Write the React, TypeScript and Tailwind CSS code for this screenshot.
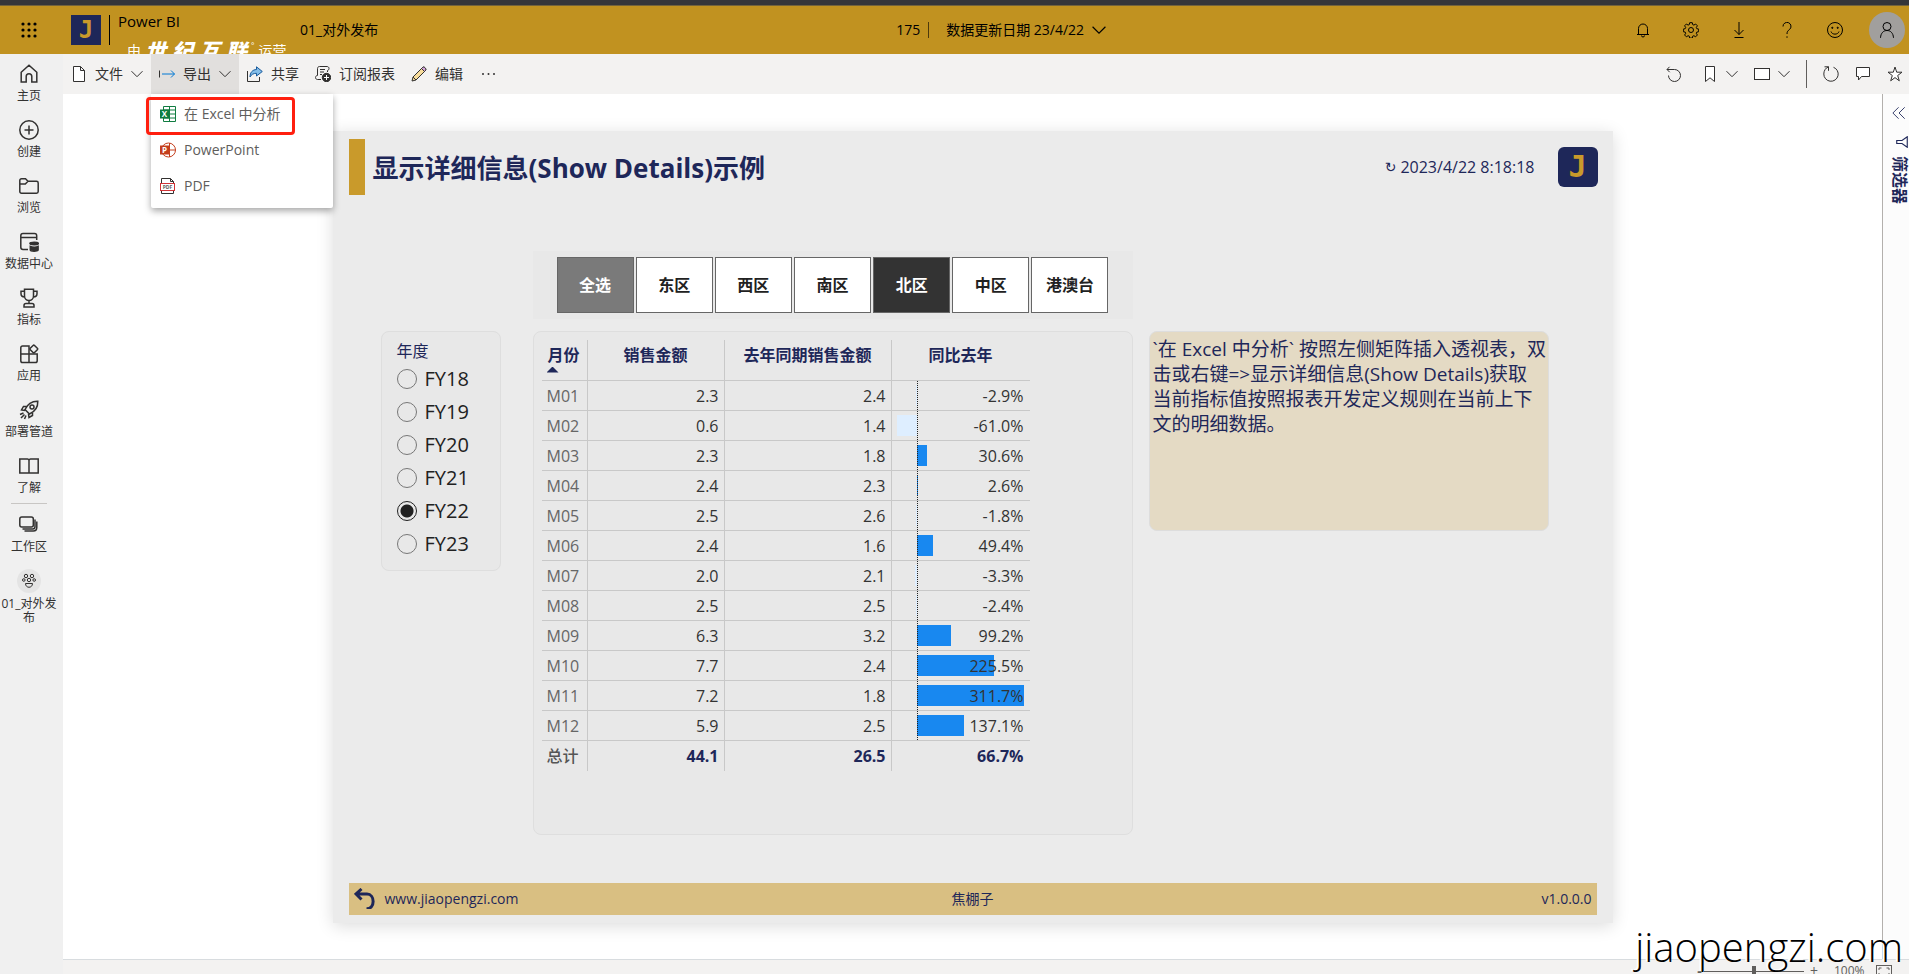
import { useState } from "react";
import type { ReactNode } from "react";

type IconProps = { className?: string; children: ReactNode; box?: number };

function Icon({ className = "size-4", children, box = 16 }: IconProps) {
  return (
    <svg
      viewBox={`0 0 ${box} ${box}`}
      className={`shrink-0 ${className}`}
      fill="none"
      stroke="currentColor"
      strokeWidth="1"
      aria-hidden="true">
      {children}
    </svg>
  );
}

function Chevron({ className = "size-3" }: { className?: string }) {
  return (
    <Icon box={12} className={className}>
      <path d="M.5 3.200 6 8.700l5.500-5.500" />
    </Icon>
  );
}

function Logo({ className }: { className: string }) {
  return (
    <span
      className={`flex shrink-0 items-center justify-center bg-[#1e2759] font-['DejaVu_Sans_Mono',monospace] font-bold text-[#c99a2b] ${className}`}>
      J
    </span>
  );
}

const navItems = [
  {
    label: "主页",
    icon: <path d="M2.200 8.300 10 1.200l7.800 7.100V18h-5v-5.500a2.800 2.800 0 0 0-5.600 0V18h-5z" />,
  },
  {
    label: "创建",
    icon: (
      <>
        <circle cx="10" cy="10" r="9.200" />
        <path d="M10 5.500v9M5.500 10h9" />
      </>
    ),
  },
  {
    label: "浏览",
    icon: <path d="M.8 15.500v-11c0-1 .7-1.700 1.700-1.700h4l2.500 2.400h8.500c1 0 1.700.7 1.700 1.700v8.600c0 1-.7 1.700-1.700 1.700h-15c-1 0-1.700-.7-1.700-1.700zM.8 8h5.500L9 5.200" />,
  },
  {
    label: "数据中心",
    icon: (
      <>
        <path d="M9 17.500H4A2.200 2.200 0 0 1 1.800 15.300V3.700C1.800 2.500 2.800 1.500 4 1.500h11.500c1.200 0 2.200 1 2.200 2.200V8M1.800 5.500h15.900" />
        <ellipse cx="15.200" cy="11.500" rx="4.300" ry="1.200" fill="currentColor" />
        <path d="M11.300 14.500v3.500c0 1.600 7.800 1.600 7.800 0v-3.500c-1.600 1-6 1-7.800 0z" fill="currentColor" />
      </>
    ),
  },
  {
    label: "指标",
    icon: (
      <path d="M5.500 1.300h9V8a4.500 4.500 0 0 1-9 0zM5.500 3.300H2v2.500C2 8 3.500 9 5.700 9M14.500 3.300H18v2.500C18 8 16.500 9 14.300 9M10 12.500v3M5 19v-1.500c0-1.200.8-2 2-2h6c1.200 0 2 .8 2 2V19z" />
    ),
  },
  {
    label: "应用",
    icon: (
      <>
        <path d="M10 10V2H3.500C2.500 2 1.800 2.700 1.800 3.700v13c0 1 .7 1.800 1.700 1.800h13c1 0 1.700-.8 1.700-1.800V10H1.800M10 10v8.500" />
        <rect x="11.800" y="2" width="6" height="6" rx="1" transform="rotate(45 14.800 5)" />
      </>
    ),
  },
  {
    label: "部署管道",
    icon: (
      <>
        <path d="M6 9.500C8.500 4 12.500 1 18.800 1.200 19 7.500 16 11.500 10.500 14zM8 6.500H4.500L2.500 10l3.500.5M13.500 12v3.500L10 17.500 9.500 14" />
        <circle cx="13" cy="7" r="2" />
        <path d="M4.500 13 1 14.500M5.500 14.500 2 18M7 15.500 5.500 19" />
      </>
    ),
  },
  {
    label: "了解",
    icon: <path d="M10 4.500C10 3.700 9.300 3 8.500 3H.8v14H10zm0 0c0-.8.7-1.500 1.500-1.500h7.700v14H10z" />,
  },
];

const regions = ["全选", "东区", "西区", "南区", "北区", "中区", "港澳台"];
const years = ["FY18", "FY19", "FY20", "FY21", "FY22", "FY23"];

const rows = [
  { month: "M01", sales: "2.3", last: "2.4", yoy: -2.9 },
  { month: "M02", sales: "0.6", last: "1.4", yoy: -61.0 },
  { month: "M03", sales: "2.3", last: "1.8", yoy: 30.6 },
  { month: "M04", sales: "2.4", last: "2.3", yoy: 2.6 },
  { month: "M05", sales: "2.5", last: "2.6", yoy: -1.8 },
  { month: "M06", sales: "2.4", last: "1.6", yoy: 49.4 },
  { month: "M07", sales: "2.0", last: "2.1", yoy: -3.3 },
  { month: "M08", sales: "2.5", last: "2.5", yoy: -2.4 },
  { month: "M09", sales: "6.3", last: "3.2", yoy: 99.2 },
  { month: "M10", sales: "7.7", last: "2.4", yoy: 225.5 },
  { month: "M11", sales: "7.2", last: "1.8", yoy: 311.7 },
  { month: "M12", sales: "5.9", last: "2.5", yoy: 137.1 },
];

const maxYoy = 311.7;
const minYoy = 61;

function TopBar() {
  return (
    <header className="flex h-[54px] shrink-0 items-center overflow-hidden border-t-[5px] border-[#35363a] bg-[#c19220] pr-1 text-black shadow-[inset_0_1px_0_#73633c]">
      <button aria-label="应用启动器" className="ml-5 flex size-[18px] items-center justify-center">
        <svg viewBox="0 0 16 16" className="size-4" aria-hidden="true">
          {[2, 8, 14].map((y) => [2, 8, 14].map((x) => <circle key={`${x}-${y}`} cx={x} cy={y} r="1.600" />))}
        </svg>
      </button>
      <Logo className="ml-[33px] size-[30px] text-2xl leading-none" />
      <span className="ml-2 h-[30px] w-px bg-black" />
      <div className="ml-2 h-[38px] w-[182px] whitespace-nowrap">
        <p className="text-[15px] leading-5">Power BI</p>
        <p className="ml-[9px] flex items-start gap-1 pt-2 text-sm leading-6 text-white">
          <span>由</span>
          <span className="flex gap-[6px] text-[21px] font-black italic">
            <span>世</span>
            <span>纪</span>
            <span>互</span>
            <span>联</span>
          </span>
          <span className="text-[8px] leading-3">°</span>
          <span>运营</span>
        </p>
      </div>
      <span className="text-sm">01_对外发布</span>
      <div className="ml-[518px] flex items-center text-sm">
        <span>175</span>
        <span className="ml-2 h-4 w-px bg-black/60" />
        <button className="ml-[17px] flex items-center gap-2">
          <span>数据更新日期 23/4/22</span>
          <Chevron className="size-[14px]" />
        </button>
      </div>
      <div className="ml-auto flex items-center">
        <button aria-label="通知" className="flex w-12 justify-center">
          <Icon>
            <path d="M2 12.500h12M3.500 12.500V6.500a4.500 4.500 0 0 1 9 0v6M6.500 13.500a1.500 1.500 0 0 0 3 0" />
          </Icon>
        </button>
        <button aria-label="设置" className="flex w-12 justify-center">
          <Icon>
            <path d="M6.700.7h2.600l.4 1.900 1.200.5 1.700-1.100 1.800 1.800-1.100 1.700.5 1.200 1.900.4v2.600l-1.900.4-.5 1.200 1.100 1.700-1.800 1.800-1.700-1.100-1.200.5-.4 1.900H6.700l-.4-1.900-1.200-.5-1.700 1.100L1.600 13l1.100-1.700-.5-1.200-1.900-.4V7.100l1.900-.4.5-1.200-1.100-1.700L3.400 2l1.700 1.100 1.200-.5z" />
            <circle cx="8" cy="8" r="2.500" />
          </Icon>
        </button>
        <button aria-label="下载" className="flex w-12 justify-center">
          <Icon>
            <path d="M8 0v12.500M3.500 8 8 12.500 12.500 8M3.500 15.500h9" />
          </Icon>
        </button>
        <button aria-label="帮助" className="flex w-12 justify-center">
          <Icon>
            <path d="M4 4.500a4 4 0 1 1 6.500 3C9 8.700 8 9.500 8 12M8 14.300v1.500" />
          </Icon>
        </button>
        <button aria-label="反馈" className="flex w-12 justify-center">
          <Icon>
            <circle cx="8" cy="8" r="7.500" />
            <path d="M4 9.500c1 3.500 7 3.500 8 0" />
            <circle cx="5.300" cy="5.800" r=".6" fill="currentColor" />
            <circle cx="10.700" cy="5.800" r=".6" fill="currentColor" />
          </Icon>
        </button>
        <button
          aria-label="帐户"
          className="ml-[10px] flex size-9 items-center justify-center rounded-full bg-[#a19f9d]">
          <Icon>
            <circle cx="8" cy="4.500" r="4" />
            <path d="M1.500 15.800C1.800 11 4.500 8.500 8 8.500s6.200 2.500 6.500 7.300" />
          </Icon>
        </button>
      </div>
    </header>
  );
}

function SideNav() {
  return (
    <nav className="w-[63px] shrink-0 bg-[#f0f0f0] text-xs text-[#323130]">
      <ul className="w-[58px]">
        {navItems.map((item) => (
          <li key={item.label}>
            <a href="#" className="flex h-14 flex-col items-center gap-1 pt-[10px] leading-4 whitespace-nowrap">
              <Icon box={20} className="size-5 [stroke-width:1.5]">
                {item.icon}
              </Icon>
              {item.label}
            </a>
          </li>
        ))}
      </ul>
      <div className="mt-px ml-[11px] h-px w-9 bg-[#c8c6c4]" />
      <div className="w-[58px]">
        <a href="#" className="flex h-14 flex-col items-center gap-1 pt-[11px] leading-4">
          <Icon box={20} className="size-5 [stroke-width:1.5]">
            <rect x=".8" y="2" width="13.500" height="10" rx="2" />
            <path d="M16 4.500v7.300c0 1.200-1 2.200-2.200 2.200H3.500M17.800 6.500v6c0 2-1.500 3.500-3.500 3.500H5.500" />
          </Icon>
          工作区
        </a>
        <a href="#" className="flex flex-col items-center gap-1 pt-[9px] text-center leading-[14px]">
          <span className="flex size-6 items-center justify-center rounded-full bg-[#e4e4e4]">
            <Icon className="size-4">
              <circle cx="5" cy="3" r="1.700" />
              <circle cx="11" cy="3" r="1.700" />
              <circle cx="2.800" cy="7" r="1.300" />
              <circle cx="13.200" cy="7" r="1.300" />
              <circle cx="8" cy="7" r="1.700" />
              <path d="M4.500 10.500h7c0 5-7 5-7 0z" />
            </Icon>
          </span>
          <span className="w-14">
            01_对外发
            <br />布
          </span>
        </a>
      </div>
    </nav>
  );
}

function ExportMenu() {
  return (
    <div
      role="menu"
      className="absolute top-full left-0 z-20 w-[182px] rounded-b-xs bg-white pt-0.5 pb-1 text-[#605e5c] shadow-[0_3px_7px_rgba(0,0,0,0.35)]">
      <button role="menuitem" className="flex h-9 w-full items-center gap-2 px-[9px]">
        <svg viewBox="0 0 16 16" className="size-4" aria-hidden="true">
          <path d="M3.500.5h12v15h-12zM9.500.5v15M3.500 4h12M3.500 8h12M3.500 12h12" fill="#fff" stroke="#107c41" />
          <rect y="3.500" width="9" height="9" fill="#107c41" />
          <text x="4.500" y="11" fontSize="8" fontWeight="700" textAnchor="middle" fill="#fff">
            X
          </text>
        </svg>
        在 Excel 中分析
      </button>
      <button role="menuitem" className="flex h-9 w-full items-center gap-2 px-[9px]">
        <svg viewBox="0 0 16 16" className="size-4" aria-hidden="true">
          <circle cx="8.500" cy="8" r="7" fill="#fff" stroke="#c43e1c" />
          <path d="M9.500 1v14M9.500 8h6" stroke="#c43e1c" />
          <rect y="3.500" width="9" height="9" fill="#c43e1c" />
          <text x="4.500" y="11" fontSize="8" fontWeight="700" textAnchor="middle" fill="#fff">
            P
          </text>
        </svg>
        PowerPoint
      </button>
      <button role="menuitem" className="flex h-9 w-full items-center gap-2 px-[9px]">
        <svg viewBox="0 0 16 16" className="size-4" aria-hidden="true">
          <path d="M1.500 5V.5h9l3 3V5M1.500 12.500v3h12v-3M10.500.5v3h3" fill="none" stroke="#323130" />
          <rect x=".5" y="5.500" width="14" height="7" fill="#fff" stroke="#d13438" />
          <text x="7.500" y="11" fontSize="5" fontWeight="700" textAnchor="middle" fill="#605e5c">
            PDF
          </text>
        </svg>
        PDF
      </button>
      <div className="pointer-events-none absolute top-[3px] -left-[5px] h-[38px] w-[149px] rounded-[4px] border-[3px] border-[#ff1f0f]" />
    </div>
  );
}

function Toolbar() {
  const [open, setOpen] = useState(true);

  return (
    <div className="flex h-10 shrink-0 items-stretch bg-[#f3f2f1] text-sm whitespace-nowrap text-[#323130]">
      <button className="flex items-center gap-2 px-2">
        <Icon>
          <path d="M2.500.5h7l4 4v11h-11zM9.500.5v4h4" fill="#fff" />
        </Icon>
        文件
        <Chevron />
      </button>
      <div className="relative flex">
        <button
          aria-expanded={open}
          onClick={() => setOpen(!open)}
          className="flex items-center gap-2 bg-[#e1dfdd] px-2">
          <Icon>
            <path d="M.5 4.500v7" />
            <path d="M3 8h12.500M12 4.500 15.500 8 12 11.500" stroke="#0078d4" />
          </Icon>
          导出
          <Chevron />
        </button>
        {open && <ExportMenu />}
      </div>
      <button className="flex items-center gap-2 px-2">
        <Icon>
          <path d="M.5 5v10.500h12V11" />
          <path d="M9.500.8 15.300 5.500 9.500 10V7.300C6.500 7.300 4.500 8.300 3 11c0-4.500 2.500-7.300 6.500-7.500z" fill="#83bde8" stroke="#185a9c" />
        </Icon>
        共享
      </button>
      <button className="flex items-center gap-2 px-2">
        <Icon>
          <path d="M6 13.500H2.500c-1 0-2-.7-2-2 0-1 .7-2 2-2V2.500c0-1 .7-2 2-2h7.500c1 0 2 .7 2 2 0 1-.7 2-1.500 2V6M5 3.500h5M5 6h4M5 8.500h2" />
          <circle cx="11.500" cy="11.500" r="4.200" fill="#323130" />
          <path d="M11.500 9v5M9 11.500h5" stroke="#fff" />
        </Icon>
        订阅报表
      </button>
      <button className="flex items-center gap-2 px-2">
        <Icon>
          <path d="M1 15l1-4L11.500 1.500c1.500-1.500 4.300 1.300 3 3L5 14z" fill="#f7dc9b" />
          <path d="M10.500 2.500l3 3 1-1c1.300-1.700-1.500-4.500-3-3z" fill="#d4a5d8" />
          <path d="M2 11l3 3" />
        </Icon>
        编辑
      </button>
      <button aria-label="更多选项" className="flex items-center px-2">
        <Icon>
          <circle cx="4" cy="8" r="1" fill="currentColor" stroke="none" />
          <circle cx="9.500" cy="8" r="1" fill="currentColor" stroke="none" />
          <circle cx="15" cy="8" r="1" fill="currentColor" stroke="none" />
        </Icon>
      </button>

      <div className="ml-auto flex items-stretch">
        <button aria-label="重置" className="mr-1 flex items-center px-2">
          <Icon>
            <path d="M3.500.8 1 3.500l2.700 2.700M1 3.500h7.500a6 6 0 1 1-6 6" />
          </Icon>
        </button>
        <button aria-label="书签" className="flex items-center gap-2 px-2">
          <Icon>
            <path d="M3.500.5h9v15L8 11.800l-4.500 3.700z" fill="#fff" />
          </Icon>
          <Chevron />
        </button>
        <button aria-label="视图" className="flex items-center gap-2 px-2">
          <Icon>
            <rect x=".5" y="2.500" width="15" height="11" fill="#fff" />
          </Icon>
          <Chevron />
        </button>
        <span className="mx-2 my-1.5 w-px bg-[#605e5c]" />
        <button aria-label="刷新" className="flex items-center px-2">
          <Icon>
            <path d="M1.500.8h4v4M5.500.8C2.500 2 .8 4.800.8 8a7.200 7.200 0 1 0 9.700-6.700" />
          </Icon>
        </button>
        <button aria-label="批注" className="flex items-center px-2">
          <Icon>
            <path d="M1.500 1.500h13v9h-8L3.500 14v-3.500h-2z" fill="#fff" />
          </Icon>
        </button>
        <button aria-label="收藏" className="flex items-center pr-1.5 pl-2">
          <Icon>
            <path d="m8 1 1.700 5.200H15l-4.300 3.300 1.600 5.300L8 11.600l-4.300 3.200 1.600-5.300L1 6.200h5.300z" fill="#fff" />
          </Icon>
        </button>
      </div>
    </div>
  );
}

function RegionSlicer() {
  const [region, setRegion] = useState("北区");

  return (
    <div className="col-start-2 flex h-[68px] items-center gap-0.5 bg-[#e8e8e8] px-6">
      {regions.map((name) => {
        let tone = "bg-white text-[#212121]";
        if (name === "全选") tone = "bg-[#7a7a7a] text-white";
        if (name === region) tone = "bg-[#333333] text-white";
        return (
          <button
            key={name}
            onClick={() => setRegion(name)}
            className={`h-14 flex-1 border border-[#666666] text-base font-bold ${tone}`}>
            {name}
          </button>
        );
      })}
    </div>
  );
}

function YearSlicer() {
  const [year, setYear] = useState("FY22");

  return (
    <fieldset className="w-[120px] self-start rounded-lg border border-[#dedede] bg-[#e8e8e8] px-[15px] pt-[7px] pb-[9px]">
      <legend className="float-left w-full text-base leading-6 text-[#1e2759]">年度</legend>
      {years.map((name) => (
        <label key={name} className="flex h-[33px] w-full items-center gap-2 text-xl text-[#212121]">
          <input
            type="radio"
            name="year"
            checked={name === year}
            onChange={() => setYear(name)}
            className="size-5 appearance-none rounded-full border border-[#777777] checked:border-[#212121] checked:bg-[radial-gradient(circle,#212121_6px,transparent_7px)]"
          />
          {name}
        </label>
      ))}
    </fieldset>
  );
}

// negative values grow to the left of the axis, positive ones to the right
function YoyCell({ value }: { value: number }) {
  return (
    <td className="relative pr-1.5 text-right">
      <span className="absolute inset-y-0 right-1.5 left-[5px] flex items-center">
        <span className="flex w-5 justify-end">
          {value < 0 && (
            <span className="h-[21px] bg-[#deeeff]" style={{ width: `${(-value / minYoy) * 100}%` }} />
          )}
        </span>
        <span className="flex flex-1">
          {value > 0 && (
            <span className="h-[21px] bg-[#1888f0]" style={{ width: `${(value / maxYoy) * 100}%` }} />
          )}
        </span>
      </span>
      <span className="absolute inset-y-0 left-[25px] w-px bg-[repeating-linear-gradient(#222_0_1px,transparent_1px_2px)]" />
      <span className="relative">{value.toFixed(1)}%</span>
    </td>
  );
}

function SalesTable() {
  return (
    <div className="min-h-[504px] rounded-lg border border-[#dedede] bg-[#e8e8e8] px-2 py-2">
      <table className="w-[488px] table-fixed border-separate border-spacing-0 text-base leading-6 whitespace-nowrap text-[#333333] [&_td]:border-[#c8c8c8] [&_td:not(:last-child)]:border-r [&_th]:border-[#c8c8c8] [&_th:not(:last-child)]:border-r">
        <colgroup>
          <col className="w-[46px]" />
          <col className="w-[137px]" />
          <col className="w-[167px]" />
          <col className="w-[138px]" />
        </colgroup>
        <thead>
          <tr className="h-[41px] text-[#1e2759] [&>th]:border-b [&>th]:pt-[3px] [&>th]:align-top">
            <th scope="col" className="relative pl-1.5 text-left">
              月份
              <span className="absolute bottom-[7px] left-[5px] h-1.5 w-3 bg-[#1e2759] [clip-path:polygon(50%_0,100%_100%,0_100%)]" />
            </th>
            <th scope="col">销售金额</th>
            <th scope="col">去年同期销售金额</th>
            <th scope="col">同比去年</th>
          </tr>
        </thead>
        <tbody>
          {rows.map((row) => (
            <tr key={row.month} className="h-[30px] [&>td]:border-b [&>td]:pt-0.5 [&>th]:border-b [&>th]:pt-0.5">
              <th scope="row" className="pl-[5px] text-left font-normal text-[#666666]">
                {row.month}
              </th>
              <td className="pr-[5px] text-right">{row.sales}</td>
              <td className="pr-[5px] text-right">{row.last}</td>
              <YoyCell value={row.yoy} />
            </tr>
          ))}
        </tbody>
        <tfoot>
          <tr className="h-[30px] font-bold text-[#1e2759]">
            <th scope="row" className="pl-[5px] text-left font-medium text-[#555555]">
              总计
            </th>
            <td className="pr-[5px] text-right">44.1</td>
            <td className="pr-[5px] text-right">26.5</td>
            <td className="pr-1.5 text-right">66.7%</td>
          </tr>
        </tfoot>
      </table>
    </div>
  );
}

function Report() {
  return (
    <article className="w-full max-w-[1280px] bg-[#ebebeb] py-2 text-[#1e2759] shadow-[0_3px_16px_rgba(0,0,0,0.14)]">
      <header className="mr-[15px] ml-4 flex h-14 items-center">
        <span className="h-14 w-4 bg-[#c99a2b]" />
        <h1 className="ml-2 pt-0.5 text-[26px] leading-9 font-bold">显示详细信息(Show Details)示例</h1>
        <span className="ml-auto flex items-center gap-1 text-base">
          <span className="font-['DejaVu_Sans',sans-serif] text-sm">↻</span>
          2023/4/22 8:18:18
        </span>
        <Logo className="ml-[23px] size-10 rounded-md text-3xl leading-none" />
      </header>

      <div className="mt-14 mr-16 ml-12 grid grid-cols-[136px_minmax(0,3fr)_minmax(0,2fr)] gap-x-4 gap-y-3">
        <RegionSlicer />
        <div className="col-start-1 flex">
          <YearSlicer />
        </div>
        <SalesTable />
        <p className="h-[200px] self-start rounded-lg border border-[#dddddd] bg-[#e4dac4] px-[3px] pt-[5px] text-[19px] leading-[25px] whitespace-nowrap">
          `在 Excel 中分析` 按照左侧矩阵插入透视表，双
          <br />
          击或右键=&gt;显示详细信息(Show Details)获取
          <br />
          当前指标值按照报表开发定义规则在当前上下
          <br />
          文的明细数据。
        </p>
      </div>

      <footer className="mx-4 mt-12 grid h-8 grid-cols-[1fr_auto_1fr] items-center bg-[#d9bf82] px-[5px] text-sm">
        <span className="flex items-center gap-[10px]">
          <Icon box={21} className="size-[21px] [stroke-width:3]">
            <path d="M7.500 1 2 6l5.500 5.500M2 6h11c8 0 8.500 15-.5 14.800" />
          </Icon>
          <a href="#">www.jiaopengzi.com</a>
        </span>
        <span>焦棚子</span>
        <span className="text-right">v1.0.0.0</span>
      </footer>
    </article>
  );
}

function FilterPane() {
  return (
    <aside className="flex w-[27px] shrink-0 flex-col items-end border-l border-[#b3b0ad] bg-[#fcfcfc] pt-3 text-[#1e2759]">
      <button aria-label="展开筛选器" className="mr-[3px]">
        <Icon className="size-[14px]">
          <path d="M7.500 1.500 1 8l6.500 6.500M14.500 1.500 8 8l6.500 6.500" />
        </Icon>
      </button>
      <Icon className="mt-4 mr-px size-3 [stroke-width:1.5]">
        <path d="M15 1v14L8 10H1V6h7z" />
      </Icon>
      <h2 className="mt-2 text-base leading-[18px] font-bold [text-orientation:sideways] [writing-mode:vertical-rl]">
        筛选器
      </h2>
    </aside>
  );
}

function StatusBar() {
  return (
    <footer className="flex h-[15px] shrink-0 items-start justify-end overflow-hidden border-t border-[#d8dcdf] bg-[#f3f2f1] pr-[17px] text-sm text-[#605e5c]">
      <div className="flex h-[22px] items-center">
        <button aria-label="缩小" className="w-[9px] leading-5 font-bold">
          -
        </button>
        <input
          type="range"
          aria-label="缩放"
          className="h-[10px] w-[100px] appearance-none bg-[linear-gradient(#605e5c,#605e5c)] bg-[length:100%_1px] bg-center bg-no-repeat [&::-webkit-slider-thumb]:h-[10px] [&::-webkit-slider-thumb]:w-1 [&::-webkit-slider-thumb]:appearance-none [&::-webkit-slider-thumb]:bg-[#605e5c]"
        />
        <button aria-label="放大" className="ml-1.5 w-2 leading-5">
          +
        </button>
        <span className="ml-4 w-8 text-xs">100%</span>
        <button aria-label="适应页面" className="ml-[10px]">
          <Icon>
            <rect x=".5" y="2.500" width="15" height="12" />
            <path d="M3 7V5h2.500M10.500 5H13v2M3 10v2h2.500M10.500 12H13v-2" />
          </Icon>
        </button>
      </div>
    </footer>
  );
}

export default function App() {
  return (
    <div className="relative flex h-screen flex-col overflow-hidden bg-white font-['Open_Sans','Noto_Sans_CJK_SC',sans-serif]">
      <TopBar />
      <div className="flex min-h-0 flex-1">
        <SideNav />
        <div className="flex min-w-0 flex-1 flex-col">
          <Toolbar />
          <div className="flex min-h-0 flex-1">
            <main className="flex min-w-0 flex-1 items-center justify-center">
              <Report />
            </main>
            <FilterPane />
          </div>
          <StatusBar />
        </div>
      </div>
      <p className="pointer-events-none absolute right-1.5 bottom-0.5 text-[40px] leading-[50px] font-light text-black [text-shadow:-2px_-1px_0_#fff]">
        jiaopengzi.com
      </p>
    </div>
  );
}
